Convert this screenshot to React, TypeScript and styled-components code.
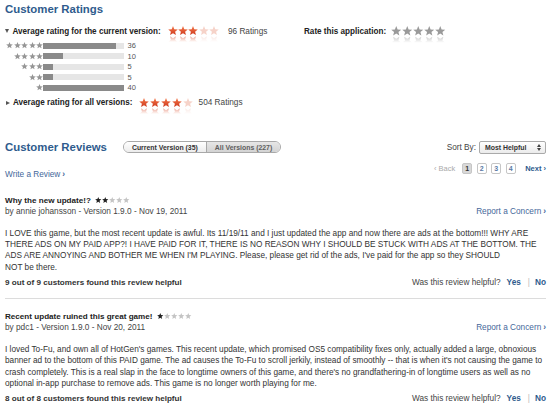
import React from "react";
import styled, { createGlobalStyle } from "styled-components";

const GlobalStyle = createGlobalStyle`
  html, body { margin: 0; padding: 0; background: #fff; }
  body {
    font-family: "Liberation Sans", Arial, Helvetica, sans-serif;
    color: #333;
    font-size: 8.25px;
  }
`;

const BLUE = "#2f5b8d";
const LINK = "#45689a";

const STAR_POINTS =
  "5,0 6.29,3.22 9.76,3.46 7.09,5.68 7.94,9.05 5,7.2 2.06,9.05 2.91,5.68 0.24,3.46 3.71,3.22";

const HiddenDefs = styled.svg`
  position: absolute;
  width: 0;
  height: 0;
`;

const StarSvg = styled.svg`
  display: block;
  flex: none;
  overflow: visible;
`;

type StarProps = { size: number; color: string; reflect?: boolean };

const Star = ({ size, color, reflect }: StarProps) => (
  <StarSvg width={size} height={size} viewBox="0 0 10 10">
    <polygon points={STAR_POINTS} fill={color} />
    {reflect && (
      <g mask="url(#reflMask)">
        <polygon points={STAR_POINTS} fill={color} transform="translate(0 19.4) scale(1 -1)" />
      </g>
    )}
  </StarSvg>
);

const Page = styled.div`
  width: 550px;
  box-sizing: border-box;
  padding: 2px 4px 0 5px;
`;

const SectionTitle = styled.h2`
  margin: 0;
  font-size: 11.4px;
  line-height: 14px;
  font-weight: bold;
  color: ${BLUE};
`;

const SummaryRow = styled.div<{ $mt: number }>`
  display: flex;
  align-items: center;
  height: 14px;
  margin-top: ${(p) => p.$mt}px;
`;

const SummaryLeft = styled.div`
  display: flex;
  align-items: center;
  width: 299px;
`;

const Triangle = styled.span<{ $dir: "down" | "right" }>`
  display: inline-block;
  width: 0;
  height: 0;
  margin-right: 3.5px;
  ${(p) =>
    p.$dir === "down"
      ? `border-left: 2.5px solid transparent; border-right: 2.5px solid transparent; border-top: 4px solid #555;`
      : `border-top: 2.5px solid transparent; border-bottom: 2.5px solid transparent; border-left: 4px solid #555; margin-left: 0.5px;`}
`;

const BoldLabel = styled.span`
  font-weight: bold;
  font-size: 8.15px;
  color: #222;
  white-space: nowrap;
`;

const Stars = styled.div<{ $gap: number; $ml?: number; $mr?: number }>`
  display: flex;
  align-items: center;
  gap: ${(p) => p.$gap}px;
  margin-left: ${(p) => p.$ml ?? 0}px;
  margin-right: ${(p) => p.$mr ?? 0}px;
`;

const CountText = styled.span`
  color: #444;
  white-space: nowrap;
`;

const Histogram = styled.div`
  margin-top: 2.25px;
`;

const HistRow = styled.div`
  display: flex;
  align-items: center;
  height: 10.5px;
`;

const HistStars = styled.div`
  width: 38px;
  display: flex;
  justify-content: flex-end;
  gap: 0.4px;
`;

const Track = styled.div`
  width: 81px;
  height: 6px;
  background: #e6e6e6;
`;

const Fill = styled.div`
  height: 100%;
  background: #8a8a8a;
`;

const HistCount = styled.span`
  margin-left: 3.5px;
  font-size: 7.5px;
  color: #555;
`;

const ReviewsHeader = styled.div`
  display: flex;
  align-items: center;
  height: 14px;
  margin-top: 30.5px;
`;

const Segmented = styled.div`
  display: flex;
  height: 12px;
  margin-left: 16px;
  border: 1px solid #a8a8a8;
  border-radius: 6px;
  overflow: hidden;
  box-sizing: border-box;
`;

const Segment = styled.span<{ $active?: boolean }>`
  display: flex;
  align-items: center;
  padding: 0 8px;
  font-size: 6.9px;
  font-weight: bold;
  white-space: nowrap;
  color: ${(p) => (p.$active ? "#333" : "#5e5e5e")};
  background: ${(p) =>
    p.$active
      ? "linear-gradient(#ffffff, #ececec)"
      : "linear-gradient(#e6e6e6, #d3d3d3)"};
  & + & {
    border-left: 1px solid #a8a8a8;
  }
`;

const SortGroup = styled.div`
  display: flex;
  align-items: center;
  margin-left: auto;
  gap: 3px;
  color: #444;
`;

const Select = styled.div`
  display: flex;
  align-items: center;
  justify-content: space-between;
  width: 67px;
  height: 13px;
  box-sizing: border-box;
  padding: 0 4px 0 5px;
  border: 1px solid #aaa;
  border-radius: 2px;
  background: linear-gradient(#ffffff, #ebebeb);
  font-size: 6.9px;
  font-weight: bold;
  color: #333;
`;

const SubHeader = styled.div`
  display: flex;
  justify-content: space-between;
  height: 19px;
  margin-top: 7px;
`;

const WriteLink = styled.a`
  align-self: flex-end;
  line-height: 11px;
  color: ${LINK};
  text-decoration: none;
`;

const Chevron = styled.span`
  font-weight: bold;
  margin-left: 2px;
`;

const Pager = styled.div`
  display: flex;
  align-items: center;
  align-self: flex-start;
  margin-top: 1.5px;
`;

const PagerText = styled.span<{ $enabled?: boolean }>`
  color: ${(p) => (p.$enabled ? BLUE : "#aaa")};
  font-weight: ${(p) => (p.$enabled ? "bold" : "normal")};
  font-size: 7.5px;
`;

const PageBoxes = styled.div`
  display: flex;
  gap: 4.5px;
  margin: 0 9.5px 0 7px;
`;

const PageBox = styled.span<{ $active?: boolean }>`
  display: flex;
  align-items: center;
  justify-content: center;
  width: 10px;
  height: 11px;
  box-sizing: border-box;
  border: 1px solid #c6c6c6;
  border-radius: 2px;
  font-size: 7px;
  font-weight: bold;
  color: ${(p) => (p.$active ? "#333" : "#5b7aa6")};
  background: ${(p) => (p.$active ? "#d8d8d8" : "#fff")};
`;

const ReviewList = styled.div`
  margin-top: 3px;
`;

const ReviewItem = styled.article`
  padding: 11.5px 0 10.5px;
  border-bottom: 1px solid #dcdcdc;
`;

const Line = styled.div`
  display: flex;
  align-items: center;
  justify-content: space-between;
  height: 11px;
  line-height: 11px;
`;

const TitleGroup = styled.div`
  display: flex;
  align-items: center;
`;

const ReviewTitle = styled.span`
  font-weight: bold;
  font-size: 8.1px;
  color: #222;
`;

const Meta = styled.span`
  color: #444;
`;

const ReportLink = styled.a`
  color: ${LINK};
  text-decoration: none;
`;

const Body = styled.p`
  margin: 11px 0 0;
  line-height: 11.4px;
  color: #333;
  white-space: nowrap;
`;

const Footer = styled(Line)`
  margin-top: 3.6px;
`;

const HelpfulCount = styled.span`
  font-weight: bold;
  font-size: 8.1px;
  color: #333;
`;

const Vote = styled.div`
  display: flex;
  align-items: center;
  color: #444;
`;

const VoteLink = styled.a`
  font-weight: bold;
  color: ${BLUE};
  text-decoration: none;
`;

const VoteSep = styled.span`
  color: #bbb;
  margin: 0 5px 0 7px;
`;

const RED = "url(#starRed)";
const PALE = "#f6d3c9";

const bigStars = (filled: number, size: number, on: string, off: string) =>
  Array.from({ length: 5 }, (_, i) => (
    <Star key={i} size={size} color={i < filled ? on : off} reflect />
  ));

const smallStars = (filled: number, size: number, on: string, off: string, count = 5) =>
  Array.from({ length: count }, (_, i) => (
    <Star key={i} size={size} color={i < filled ? on : off} />
  ));

const histogram = [
  { stars: 5, count: 36 },
  { stars: 4, count: 10 },
  { stars: 3, count: 5 },
  { stars: 2, count: 5 },
  { stars: 1, count: 40 },
];

const reviews = [
  {
    title: "Why the new update!?",
    rating: 2,
    meta: "by annie johansson - Version 1.9.0 - Nov 19, 2011",
    lines: [
      "I LOVE this game, but the most recent update is awful. Its 11/19/11 and I just updated the app and now there are ads at the bottom!!! WHY ARE",
      "THERE ADS ON MY PAID APP?! I HAVE PAID FOR IT, THERE IS NO REASON WHY I SHOULD BE STUCK WITH ADS AT THE BOTTOM. THE",
      "ADS ARE ANNOYING AND BOTHER ME WHEN I'M PLAYING. Please, please get rid of the ads, I've paid for the app so they SHOULD",
      "NOT be there.",
    ],
    helpful: "9 out of 9 customers found this review helpful",
  },
  {
    title: "Recent update ruined this great game!",
    rating: 1,
    meta: "by pdc1 - Version 1.9.0 - Nov 20, 2011",
    lines: [
      "I loved To-Fu, and own all of HotGen's games. This recent update, which promised OS5 compatibility fixes only, actually added a large, obnoxious",
      "banner ad to the bottom of this PAID game. The ad causes the To-Fu to scroll jerkily, instead of smoothly -- that is when it's not causing the game to",
      "crash completely. This is a real slap in the face to longtime owners of this game, and there's no grandfathering-in of longtime users as well as no",
      "optional in-app purchase to remove ads. This game is no longer worth playing for me.",
    ],
    helpful: "8 out of 8 customers found this review helpful",
  },
];

export default function App() {
  return (
    <>
      <GlobalStyle />
      <HiddenDefs aria-hidden="true">
        <defs>
          <linearGradient id="starRed" x1="0" y1="0" x2="0" y2="1">
            <stop offset="0" stopColor="#f4794a" />
            <stop offset="1" stopColor="#cf3a1f" />
          </linearGradient>
          <linearGradient id="reflGrad" x1="0" y1="0" x2="0" y2="1">
            <stop offset="0" stopColor="#fff" stopOpacity="0.5" />
            <stop offset="1" stopColor="#fff" stopOpacity="0" />
          </linearGradient>
          <mask id="reflMask" maskUnits="userSpaceOnUse" x="-2" y="9" width="14" height="12">
            <rect x="-2" y="10" width="14" height="6" fill="url(#reflGrad)" />
          </mask>
        </defs>
      </HiddenDefs>
      <Page>
        <SectionTitle>Customer Ratings</SectionTitle>
        <SummaryRow $mt={8}>
          <SummaryLeft>
            <Triangle $dir="down" />
            <BoldLabel>Average rating for the current version:</BoldLabel>
            <Stars $gap={0.3} $ml={7} $mr={9}>
              {bigStars(3, 10, RED, PALE)}
            </Stars>
            <CountText>96 Ratings</CountText>
          </SummaryLeft>
          <BoldLabel>Rate this application:</BoldLabel>
          <Stars $gap={0.6} $ml={4.5}>
            {bigStars(0, 10.5, "#999", "#9a9a9a")}
          </Stars>
        </SummaryRow>
        <Histogram>
          {histogram.map((h) => (
            <HistRow key={h.stars}>
              <HistStars>{smallStars(h.stars, 7, "#969696", "#969696", h.stars)}</HistStars>
              <Track>
                <Fill style={{ width: `${(h.count / 40) * 100}%` }} />
              </Track>
              <HistCount>{h.count}</HistCount>
            </HistRow>
          ))}
        </Histogram>
        <SummaryRow $mt={2.75}>
          <Triangle $dir="right" />
          <BoldLabel>Average rating for all versions:</BoldLabel>
          <Stars $gap={0.8} $ml={7} $mr={6}>
            {bigStars(4, 10, RED, PALE)}
          </Stars>
          <CountText>504 Ratings</CountText>
        </SummaryRow>

        <ReviewsHeader>
          <SectionTitle>Customer Reviews</SectionTitle>
          <Segmented>
            <Segment $active>Current Version (35)</Segment>
            <Segment>All Versions (227)</Segment>
          </Segmented>
          <SortGroup>
            <span>Sort By:</span>
            <Select>
              <span>Most Helpful</span>
              <svg width="4" height="7" viewBox="0 0 4 7">
                <polygon points="0,3 2,0 4,3" fill="#444" />
                <polygon points="0,4 2,7 4,4" fill="#444" />
              </svg>
            </Select>
          </SortGroup>
        </ReviewsHeader>
        <SubHeader>
          <WriteLink href="#">
            Write a Review<Chevron>›</Chevron>
          </WriteLink>
          <Pager>
            <PagerText>‹ Back</PagerText>
            <PageBoxes>
              <PageBox $active>1</PageBox>
              <PageBox>2</PageBox>
              <PageBox>3</PageBox>
              <PageBox>4</PageBox>
            </PageBoxes>
            <PagerText $enabled>Next ›</PagerText>
          </Pager>
        </SubHeader>

        <ReviewList>
          {reviews.map((r) => (
            <ReviewItem key={r.title}>
              <Line>
                <TitleGroup>
                  <ReviewTitle>{r.title}</ReviewTitle>
                  <Stars $gap={0.5} $ml={4}>
                    {smallStars(r.rating, 6.5, "#222", "#c4c4c4")}
                  </Stars>
                </TitleGroup>
              </Line>
              <Line>
                <Meta>{r.meta}</Meta>
                <ReportLink href="#">
                  Report a Concern<Chevron>›</Chevron>
                </ReportLink>
              </Line>
              <Body>
                {r.lines.map((l, i) => (
                  <React.Fragment key={i}>
                    {l}
                    {i < r.lines.length - 1 && <br />}
                  </React.Fragment>
                ))}
              </Body>
              <Footer>
                <HelpfulCount>{r.helpful}</HelpfulCount>
                <Vote>
                  <span>Was this review helpful?</span>
                  <VoteLink href="#" style={{ marginLeft: 6 }}>
                    Yes
                  </VoteLink>
                  <VoteSep>|</VoteSep>
                  <VoteLink href="#">No</VoteLink>
                </Vote>
              </Footer>
            </ReviewItem>
          ))}
        </ReviewList>
      </Page>
    </>
  );
}
